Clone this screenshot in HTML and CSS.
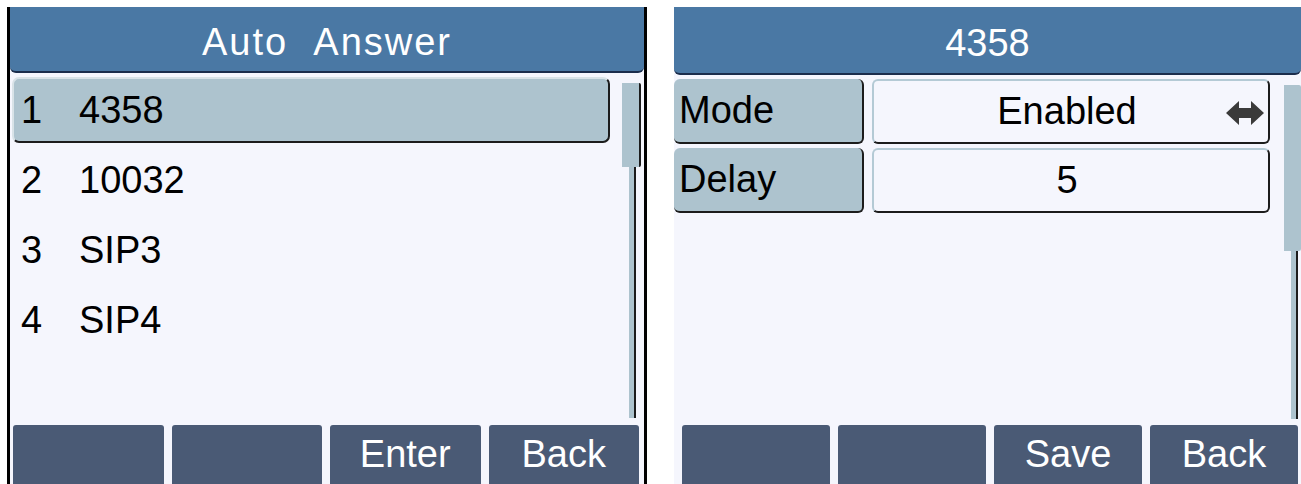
FILE: index.html
```html
<!DOCTYPE html>
<html lang="en">
<head>
<meta charset="utf-8">
<title>Auto Answer</title>
<link rel="stylesheet" href="styles.css">
</head>
<body>
<div class="phones">
  <section class="screen screen-left">
    <header class="title title-wide">Auto&nbsp;&nbsp;Answer</header>
    <div class="main">
      <ul class="list">
        <li class="item selected"><span class="num">1</span><span class="name">4358</span></li>
        <li class="item"><span class="num">2</span><span class="name">10032</span></li>
        <li class="item"><span class="num">3</span><span class="name">SIP3</span></li>
        <li class="item"><span class="num">4</span><span class="name">SIP4</span></li>
      </ul>
      <div class="scrollbar">
        <div class="thumb thumb-short"></div>
        <div class="track"></div>
      </div>
    </div>
    <footer class="softkeys">
      <div class="key"></div>
      <div class="key"></div>
      <div class="key">Enter</div>
      <div class="key">Back</div>
    </footer>
  </section>

  <section class="screen screen-right">
    <header class="title">4358</header>
    <div class="main">
      <div class="form">
        <div class="field">
          <div class="label">Mode</div>
          <div class="value">Enabled
            <svg class="switch" width="38" height="24" viewBox="0 0 38 24" aria-hidden="true">
              <polygon points="0,12 13,0 13,7 25,7 25,0 38,12 25,24 25,17 13,17 13,24" fill="#3a3a3a"/>
            </svg>
          </div>
        </div>
        <div class="field">
          <div class="label">Delay</div>
          <div class="value">5</div>
        </div>
      </div>
      <div class="scrollbar scrollbar-right">
        <div class="thumb thumb-long"></div>
        <div class="track"></div>
      </div>
    </div>
    <footer class="softkeys softkeys-right">
      <div class="key"></div>
      <div class="key"></div>
      <div class="key">Save</div>
      <div class="key">Back</div>
    </footer>
  </section>
</div>
</body>
</html>
```

FILE: styles.css
```css
* { box-sizing: border-box; }

html, body {
  margin: 0;
  padding: 0;
  background: #ffffff;
  height: 484px;
  overflow: hidden;
}

body {
  font-family: "Liberation Sans", Arial, sans-serif;
  font-size: 38px;
  color: #000;
}

.phones {
  display: flex;
  padding: 7px 0 0 7px;
  gap: 27px;
  height: 484px;
}

.screen {
  display: flex;
  flex-direction: column;
  height: 477px;
  background: #f5f6fd;
}

.screen-left {
  width: 640px;
  flex: none;
  border-left: 3px solid #000;
  border-right: 3px solid #000;
}

.screen-right {
  flex: 1;
  min-width: 0;
}

.title {
  flex: none;
  height: 66px;
  background: #4a78a4;
  border-bottom: 2px solid #1b2d4c;
  border-radius: 0 0 6px 6px;
  color: #fff;
  display: flex;
  align-items: center;
  justify-content: center;
  padding-top: 7px;
  white-space: nowrap;
}

.title-wide {
  letter-spacing: 2px;
}

.screen-right .title {
  height: 68px;
}

.main {
  flex: 1;
  display: flex;
  min-height: 0;
}

.list {
  list-style: none;
  margin: 0;
  padding: 4px 0 0 2px;
  width: 612px;
  display: flex;
  flex-direction: column;
  gap: 4px;
}

.item {
  height: 66px;
  width: 598px;
  display: flex;
  align-items: center;
  padding-left: 7px;
  border: 2px solid transparent;
  border-radius: 7px;
}

.item.selected {
  background: #adc3ce;
  border-color: #d9e3e8 #1c1c1c #1c1c1c #d9e3e8;
}

.num {
  width: 58px;
}

.scrollbar {
  width: 20px;
  display: flex;
  flex-direction: column;
  padding-top: 10px;
}

.thumb {
  width: 19px;
  background: #adc3ce;
  border-right: 2px solid #1c1c1c;
  border-radius: 0 2px 2px 0;
}

.thumb-short { height: 84px; }
.thumb-long { height: 166px; }

.track {
  height: 251px;
  width: 8px;
  margin-left: 6px;
  background: #adc3ce;
  border-right: 2px solid #1c1c1c;
  border-left: 1px solid #f5f6fd;
}

.scrollbar-right {
  width: 17px;
  margin-left: auto;
  padding-top: 10px;
}

.scrollbar-right .thumb {
  width: 17px;
  border-right: none;
}

.scrollbar-right .track {
  height: 168px;
}

.form {
  display: flex;
  flex-direction: column;
  gap: 4px;
  padding-top: 4px;
}

.field {
  display: grid;
  grid-template-columns: 190px 398px;
  gap: 8px;
  height: 65px;
}

.label {
  background: #adc3ce;
  border-right: 2px solid #1c1c1c;
  border-bottom: 2px solid #1c1c1c;
  border-radius: 6px;
  display: flex;
  align-items: center;
  padding-left: 5px;
}

.value {
  position: relative;
  background: #f5f6fd;
  border: 2px solid #b4cad5;
  border-right-color: #1c1c1c;
  border-bottom-color: #1c1c1c;
  border-radius: 6px;
  display: flex;
  align-items: center;
  justify-content: center;
  padding-right: 8px;
}

.switch {
  position: absolute;
  right: 4px;
  top: 20px;
}

.softkeys {
  flex: none;
  height: 59px;
  display: flex;
  gap: 8px;
  padding-left: 3px;
  padding-right: 5px;
}

.softkeys-right {
  gap: 8px;
  padding-left: 8px;
  padding-right: 3px;
}

.key {
  flex: 1;
  background: #4a5a75;
  border-radius: 3px 3px 0 0;
  color: #fff;
  display: flex;
  align-items: center;
  justify-content: center;
}
```
